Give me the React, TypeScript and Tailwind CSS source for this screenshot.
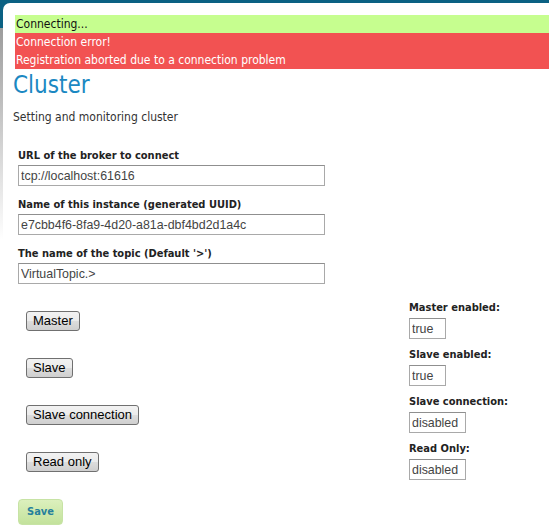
import React from "react";

const tahoma = { fontFamily: '"DejaVu Sans Condensed", "DejaVu Sans", sans-serif' };
const arial = { fontFamily: '"Liberation Sans", Arial, sans-serif' };

function Field({ label, value }: { label: string; value: string }) {
  return (
    <div className="flex flex-col">
      <div className="text-[11px] leading-[14px] font-bold text-[#222]" style={tahoma}>{label}</div>
      <input
        readOnly
        value={value}
        className="mt-[2px] w-[307px] h-[21px] border border-[#a9a9a9] border-t-[#8f8f8f] px-[2px] text-[12.4px] text-[#444] outline-none"
        style={arial}
      />
    </div>
  );
}

function Row({ btn, label, value, w }: { btn: string; label: string; value: string; w: string }) {
  return (
    <div className="flex items-start h-[47px]">
      <div className="w-[391px] pl-[8px] pt-[7px]">
        <button
          className="h-[20px] px-[6px] border border-[#707070] rounded-[3px] bg-[linear-gradient(to_bottom,#f2f2f2_0%,#ebebeb_50%,#dddddd_51%,#cfcfcf_100%)] text-[13px] leading-[18px] text-[#000]"
          style={arial}
        >
          {btn}
        </button>
      </div>
      <div className="flex flex-col">
        <div className="text-[11px] leading-[14px] font-bold text-[#222]" style={tahoma}>{label}</div>
        <input
          readOnly
          value={value}
          className={`mt-[3px] ${w} h-[21px] border border-[#a9a9a9] border-t-[#8f8f8f] px-[2px] text-[12.4px] text-[#444] outline-none`}
          style={arial}
        />
      </div>
    </div>
  );
}

export default function App() {
  return (
    <div className="w-[549px] h-[527px] overflow-hidden pl-[3px] pt-[3px] bg-[linear-gradient(to_bottom,#0b6183_0px,#0b6183_28px,#9c9c9c_28px,#ffffff_240px)]">
      <div className="h-full bg-white rounded-tl-[7px] pt-[12px] pl-[12px]" style={tahoma}>
        <div className="bg-[#c6fe8f] h-[18px] leading-[18px] text-[12px] text-[#111] pl-[1px]">Connecting...</div>
        <div className="bg-[#f25252] text-white text-[12px] leading-[18px] pl-[1px]">
          <div>Connection error!</div>
          <div>Registration aborted due to a connection problem</div>
        </div>
        <h1 className="mt-[2px] text-[24px] leading-[29px] text-[#1b88c2] font-normal -ml-[2px]">Cluster</h1>
        <p className="mt-[10px] text-[12px] leading-[15px] text-[#333] -ml-[2px]">Setting and monitoring cluster</p>
        <div className="pl-[3px] mt-[24px] flex flex-col gap-[12px]">
          <Field label="URL of the broker to connect" value="tcp://localhost:61616" />
          <Field label="Name of this instance (generated UUID)" value="e7cbb4f6-8fa9-4d20-a81a-dbf4bd2d1a4c" />
          <Field label="The name of the topic (Default '>')" value="VirtualTopic.>" />
        </div>
        <div className="pl-[3px] mt-[17px] flex flex-col">
          <Row btn="Master" label="Master enabled:" value="true" w="w-[37px]" />
          <Row btn="Slave" label="Slave enabled:" value="true" w="w-[37px]" />
          <Row btn="Slave connection" label="Slave connection:" value="disabled" w="w-[57px]" />
          <Row btn="Read only" label="Read Only:" value="disabled" w="w-[57px]" />
        </div>
        <div className="pl-[3px] mt-[9px]">
          <button className="w-[45px] h-[26px] rounded-[4px] border border-[#c7e3a5] bg-[linear-gradient(to_bottom,#dcf0bd,#c3e29c)] text-[11px] font-bold text-[#26809c]" style={tahoma}>
            Save
          </button>
        </div>
      </div>
    </div>
  );
}
